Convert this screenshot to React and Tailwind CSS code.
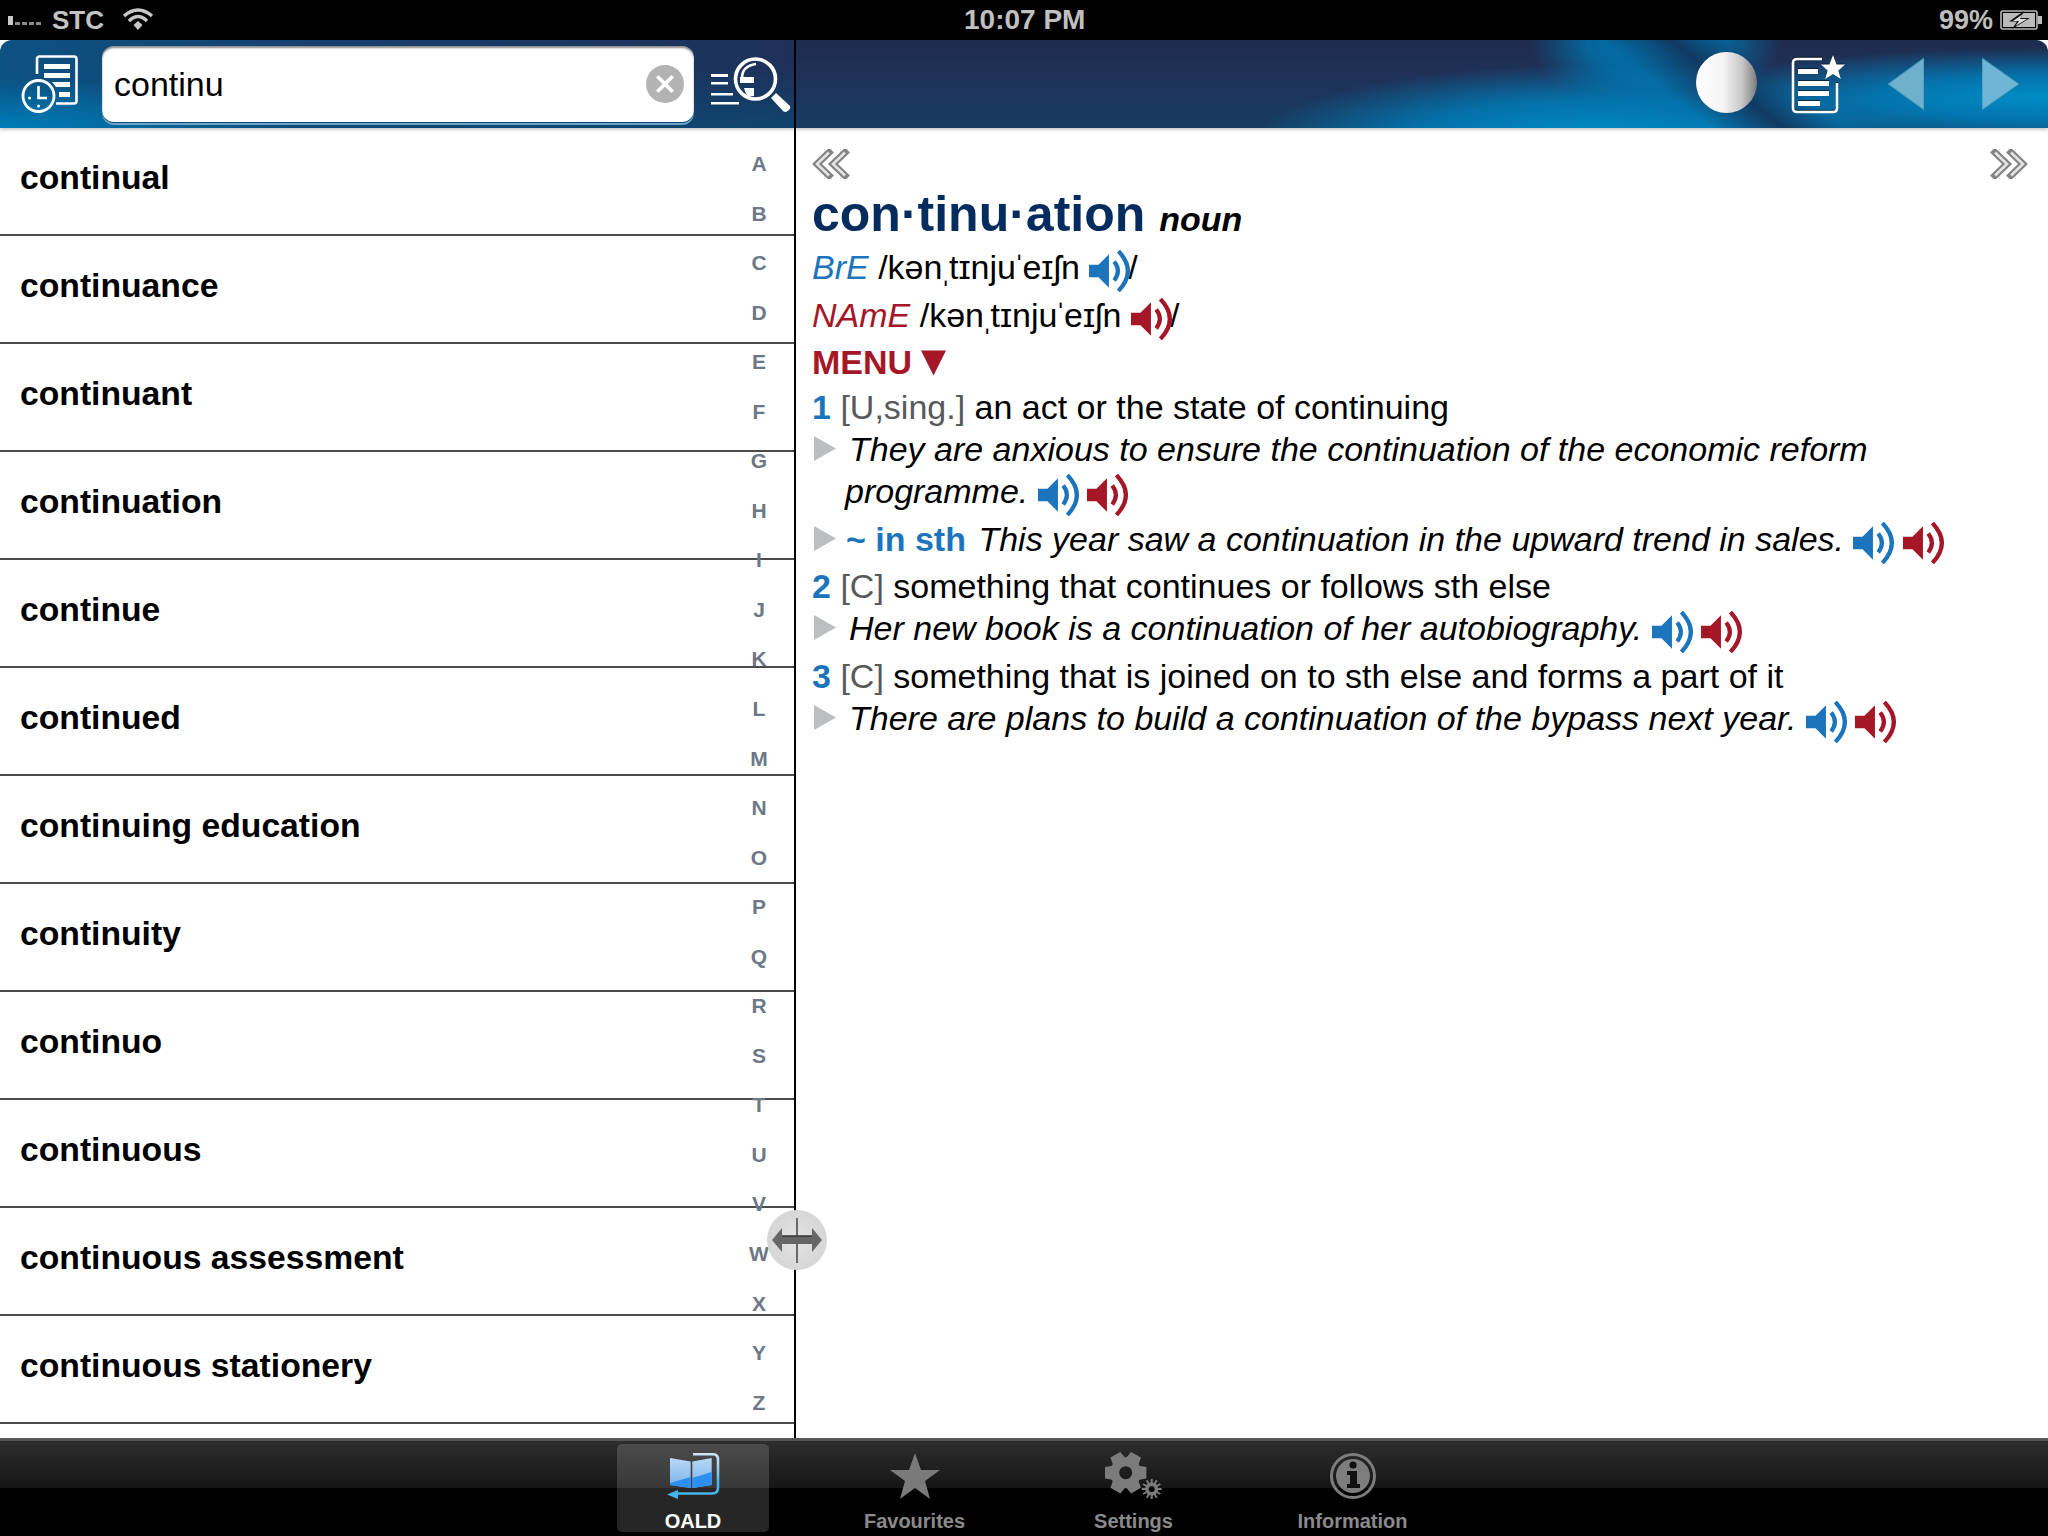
import React from "react";

const words = ["continual","continuance","continuant","continuation","continue","continued","continuing education","continuity","continuo","continuous","continuous assessment","continuous stationery"];
const letters = "ABCDEFGHIJKLMNOPQRSTUVWXYZ".split("");

function Speaker({ color, className = "" }) {
  return (
    <svg viewBox="0 0 40 40" className={"inline-block w-[42px] h-[42px] align-middle translate-y-[1px] " + className}>
      <path d="M0 14H9L19 4V36L9 26H0Z" fill={color} />
      <path d="M24 11Q31 20 24 29" fill="none" stroke={color} strokeWidth="4" />
      <path d="M28 1Q46 20 28 39" fill="none" stroke={color} strokeWidth="4" />
    </svg>
  );
}
const Blue = (p) => <Speaker color="#1c75bc" {...p} />;
const Red = (p) => <Speaker color="#a51727" {...p} />;

function Tri() {
  return (
    <svg viewBox="0 0 22 25" className="w-[22px] h-[25px] shrink-0 mt-[8px] ml-[2px]">
      <path d="M0 0L22 12.5L0 25Z" fill="#bcbec0" />
    </svg>
  );
}

function Chevrons({ flip }) {
  const paths = ["M17 3.5L5 15L17 26.5", "M33 3.5L21 15L33 26.5"];
  return (
    <svg viewBox="0 0 38 30" className={"w-[38px] h-[30px] " + (flip ? "-scale-x-100" : "")}>
      {paths.map((d) => (
        <g key={d} fill="none">
          <path d={d} stroke="#848484" strokeWidth="7" strokeLinecap="square" />
          <path d={d} stroke="#e4e4e4" strokeWidth="2.6" />
        </g>
      ))}
    </svg>
  );
}

function HistoryIcon() {
  return (
    <svg viewBox="0 0 57 59" className="w-[57px] h-[59px] shrink-0">
      <path d="M16 19V4Q16 1.5 18.5 1.5H53Q55.5 1.5 55.5 4V46Q55.5 48.5 53 48.5H35" fill="none" stroke="#fff" strokeWidth="2.6" />
      <path d="M23 9H49V14H23ZM23 18H49V23H23ZM31 27H49V32H35ZM38 37H49V42H38Z" fill="#fff" />
      <circle cx="17.5" cy="41" r="15.5" fill="none" stroke="#fff" strokeWidth="2.8" />
      <path d="M17.5 31V43H26" fill="none" stroke="#fff" strokeWidth="2.6" />
      <circle cx="17.5" cy="51" r="1.5" fill="#fff" />
      <circle cx="8.5" cy="43" r="1.5" fill="#fff" />
    </svg>
  );
}

function SearchIcon() {
  return (
    <svg viewBox="0 0 81 56" className="w-[81px] h-[56px] shrink-0">
      <path d="M1 18H18V21H1ZM1 26H18V28.5H1ZM1 37H23V39.5H1ZM1 46H29V48.5H1Z" fill="#fff" />
      <circle cx="45.5" cy="23" r="20" fill="none" stroke="#fff" strokeWidth="3.6" />
      <path d="M32 22Q32 10 46 8" fill="none" stroke="#fff" strokeWidth="2.6" />
      <path d="M30 21H44V27H30ZM34 32H44V40H38Q35 37 34 32Z" fill="#fff" />
      <path d="M61 42L66 37L80 50Q81 52 79 54L76 56Q74 56 73 55Z" fill="#fff" />
    </svg>
  );
}

function DocStar() {
  return (
    <svg viewBox="0 0 54 60" className="w-[54px] h-[60px] drop-shadow-[0_-1px_0_rgba(0,0,0,0.55)]">
      <path d="M31 5H6Q2 5 2 9V54Q2 58 6 58H42Q46 58 46 54V29" fill="none" stroke="#fff" strokeWidth="2.6" />
      <path d="M7 15H27V20H7ZM7 27H38V32H7ZM7 37H38V42H7ZM7 47H29V52H7Z" fill="#fff" />
      <path d="M42 1L45.6 10.6H54L47.4 16.4L49.8 25L42 20L34.2 25L36.6 16.4L30 10.6H38.4Z" fill="#fff" />
    </svg>
  );
}

function Wifi() {
  return (
    <svg viewBox="0 0 32 24" className="w-[32px] h-[24px]">
      <path d="M2 9Q16 -3 30 9" fill="none" stroke="#c8c8c8" strokeWidth="3.4" />
      <path d="M7 14Q16 5 25 14" fill="none" stroke="#c8c8c8" strokeWidth="3.4" />
      <path d="M11.5 18L16 14L20.5 18L16 23Z" fill="#c8c8c8" />
    </svg>
  );
}

function Battery() {
  return (
    <svg viewBox="0 0 42 20" className="w-[42px] h-[20px]">
      <rect x="1" y="1" width="36" height="18" rx="1.5" fill="none" stroke="#bbb" strokeWidth="1.6" />
      <rect x="3" y="3" width="32" height="14" fill="#bbb" />
      <rect x="38" y="6" width="4" height="8" fill="#bbb" />
      <path d="M24 1L9 11.5H17L12 19L30 8H21Z" fill="#111" />
      <path d="M23 4L13 11H19L15.5 16L27 9H20Z" fill="#ddd" />
    </svg>
  );
}

function Signal() {
  return (
    <div className="flex items-end gap-[2px] w-[39px]">
      <div className="w-[5px] h-[9px] bg-[#c8c8c8]" />
      {[0, 1, 2, 3].map((i) => <div key={i} className="w-[5px] h-[3px] bg-[#8a8a8a]" />)}
    </div>
  );
}

function Book() {
  return (
    <svg viewBox="0 0 54 46" className="w-[54px] h-[46px]">
      <defs>
        <linearGradient id="pg" x1="0" y1="0" x2="0" y2="1">
          <stop offset="0" stopColor="#b9d8f6" />
          <stop offset="1" stopColor="#78b2ea" />
        </linearGradient>
        <linearGradient id="arc" x1="0" y1="0" x2="0" y2="1">
          <stop offset="0" stopColor="#cde6f8" />
          <stop offset="0.5" stopColor="#7cc8f2" />
          <stop offset="0.7" stopColor="#45b6f0" />
          <stop offset="1" stopColor="#45b6f0" />
        </linearGradient>
      </defs>
      <path d="M4 5L24.7 8.5V35L4 32Z" fill="url(#pg)" />
      <path d="M26.3 8.5L45.7 5V32L26.3 35Z" fill="url(#pg)" />
      <path d="M4 30L24.7 24V35L4 32Z" fill="#2b90f0" />
      <path d="M26.3 25L45.7 19V32L26.3 35Z" fill="#2b90f0" />
      <path d="M27 1.3H47Q52 1.3 52 6.5V35Q52 40.5 46 40.5H11" fill="none" stroke="url(#arc)" strokeWidth="2.6" />
      <path d="M1 41.5L12 37V46Z" fill="#45b6f0" />
    </svg>
  );
}

function Star() {
  return (
    <svg viewBox="0 0 50 46" className="w-[50px] h-[46px]">
      <path d="M25 0L31 17H50L35 28L40 46L25 35L10 46L15 28L0 17H19Z" fill="#7a7a7a" />
    </svg>
  );
}

function Gear() {
  const big = [30, 90, 150, 210, 270, 330];
  const small = [0, 30, 60, 90, 120, 150, 180, 210, 240, 270, 300, 330];
  return (
    <svg viewBox="0 0 58 46" className="w-[58px] h-[46px] overflow-visible">
      {big.map((a) => <path key={a} d="M15 -1H26.4L28 8H13.4Z" fill="#7b7b7b" transform={`rotate(${a} 20.7 19.7)`} />)}
      <circle cx="20.7" cy="19.7" r="11" fill="none" stroke="#7b7b7b" strokeWidth="9" />
      {small.map((a) => <rect key={a} x="45.7" y="26" width="2" height="6" fill="#7b7b7b" transform={`rotate(${a} 46.7 36)`} />)}
      <circle cx="46.7" cy="36" r="4.8" fill="none" stroke="#7b7b7b" strokeWidth="3.6" />
    </svg>
  );
}

function Info() {
  return (
    <svg viewBox="0 0 46 46" className="w-[46px] h-[46px]">
      <circle cx="23" cy="23" r="21.5" fill="none" stroke="#7d7d7d" strokeWidth="3" />
      <circle cx="23" cy="23" r="17" fill="#7d7d7d" />
      <circle cx="23" cy="12" r="3.6" fill="#111" />
      <path d="M17 18H27V31H30V35H17V31H20V22H17Z" fill="#111" />
    </svg>
  );
}

function Tab({ active, icon, label }) {
  return (
    <div className={"w-[152px] h-[88px] flex flex-col items-center rounded-[5px] " + (active ? "ml-[31px] mr-[36px] bg-white/15" : "mx-[33.5px]")}>
      <div className="h-[46px] mt-[9px]">{icon}</div>
      <span className={"mt-[10px] text-[20px] leading-[24px] font-bold " + (active ? "text-white" : "text-[#8a8a8a]")}>{label}</span>
    </div>
  );
}

const Phon = () => (
  <>/kən<span className="-mx-[2.4px]">ˌ</span>tɪnju<span className="-mx-[2.4px]">ˈ</span>eɪʃn</>
);

export default function App() {
  return (
    <div className="relative w-[2048px] h-[1536px] bg-black overflow-hidden font-['Liberation_Sans',sans-serif] text-black">
      <div className="relative h-[40px] bg-black flex items-center justify-between pl-[8px] pr-[6px] text-[#bdbdbd]">
        <div className="flex items-center">
          <Signal />
          <span className="ml-[5px] text-[26px] font-bold text-[#c4c4c4]">STC</span>
          <span className="ml-[18px] mb-[3px]"><Wifi /></span>
        </div>
        <span className="absolute left-[964px] text-[28px] leading-[40px] font-bold text-[#c0c0c0]">10:07 PM</span>
        <div className="flex items-center gap-[7px]">
          <span className="text-[27px] font-bold">99%</span>
          <Battery />
        </div>
      </div>

      <div className="flex h-[1398px] bg-white">
        <div className="w-[794px] flex flex-col relative">
          <div className="relative z-10 h-[88px] rounded-tl-[12px] flex items-center pl-[21px] shadow-[0_2px_3px_rgba(0,0,0,0.2)] bg-[radial-gradient(ellipse_300px_50px_at_0%_100%,#007db8_0%,rgba(0,110,170,0)_100%),linear-gradient(180deg,rgba(0,0,0,0)_30%,rgba(5,80,125,0.6)_100%),linear-gradient(95deg,#0c5283_0%,#16406e_40%,#1e3058_100%)]">
            <HistoryIcon />
            <div className="ml-[24px] w-[592px] h-[76px] bg-white rounded-[12px] shadow-[0_1px_0_#0b4a78,0_3px_0_#6ea5c4,inset_0_2px_2px_rgba(0,0,0,0.45)] flex items-center pl-[12px] pr-[10px] justify-between">
              <span className="text-[34px] leading-[40px]">continu</span>
              <span className="w-[38px] h-[38px] rounded-full bg-[#b3b3b3] flex items-center justify-center">
                <svg viewBox="0 0 20 20" className="w-[22px] h-[22px]">
                  <path d="M3 3L17 17M17 3L3 17" stroke="#fff" strokeWidth="3.4" />
                </svg>
              </span>
            </div>
            <div className="ml-[16px]"><SearchIcon /></div>
          </div>
          <div className="relative flex-1 overflow-hidden">
            {words.map((w) => (
              <div key={w} className="h-[108px] border-b-2 border-[#4a4a4a] pl-[20px] pb-[9px] flex items-center text-[33.7px] font-bold leading-[40px]">
                {w}
              </div>
            ))}
            <div className="absolute right-[19px] top-[23px] h-[1264px] w-[32px] flex flex-col justify-between items-center">
              {letters.map((l) => (
                <span key={l} className="h-[25px] text-[21px] leading-[25px] font-bold text-[#6d7887]">{l}</span>
              ))}
            </div>
          </div>
        </div>

        <div className="w-[2px] bg-black" />

        <div className="flex-1 flex flex-col">
          <div className="relative z-10 h-[88px] rounded-tr-[12px] flex items-center justify-end pr-[29px] shadow-[0_2px_3px_rgba(0,0,0,0.2)] bg-[linear-gradient(38deg,rgba(18,55,95,0)_565px,rgba(18,55,95,0.95)_608px,rgba(18,55,95,0)_645px),radial-gradient(ellipse_340px_75px_at_800px_100px,#0090cc_0%,rgba(0,125,185,0.8)_55%,rgba(0,125,185,0)_100%),radial-gradient(ellipse_125px_75px_at_860px_0px,#0073ad_0%,rgba(0,115,173,0.8)_55%,rgba(0,115,173,0)_100%),radial-gradient(ellipse_360px_50px_at_1240px_58px,#008cc6_0%,rgba(0,125,185,0.85)_45%,rgba(0,125,185,0)_100%),linear-gradient(180deg,#1e2c4e_0%,#1f3158_40%,#173d62_100%)]">
            <div className="w-[61px] h-[61px] mb-[3px] rounded-full bg-[linear-gradient(90deg,#ffffff_0%,#f4f4f4_45%,#c8c8c8_75%,#7c7c7c_100%)]" />
            <div className="ml-[34px]"><DocStar /></div>
            <svg viewBox="0 0 36 52" className="ml-[43px] w-[36px] h-[52px]">
              <path d="M36 0V52L0 26Z" fill="#6fb0cd" stroke="#3f8fb5" strokeWidth="1" />
            </svg>
            <svg viewBox="0 0 37 52" className="ml-[58px] w-[37px] h-[52px]">
              <path d="M0 0V52L37 26Z" fill="#6fb5d6" stroke="#3f8fb5" strokeWidth="1" />
            </svg>
          </div>

          <div className="flex-1 bg-white pl-[16px] pr-[20px] pt-[21px] text-[34px] leading-[42px]">
            <div className="flex justify-between h-[30px]">
              <Chevrons />
              <Chevrons flip />
            </div>
            <div className="mt-[5px] h-[60px] leading-[60px] text-[#042c5e] text-[50px] font-bold whitespace-nowrap">
              con·tinu·ation <span className="text-[34px] text-black italic">noun</span>
            </div>
            <div className="h-[46px] leading-[46px] whitespace-nowrap">
              <i className="text-[#1c75bc]">BrE</i> <Phon /> <Blue /><span className="-ml-[3px]">/</span>
            </div>
            <div className="h-[50px] leading-[50px] whitespace-nowrap">
              <i className="text-[#a51727]">NAmE</i> <Phon /> <Red /><span className="-ml-[3px]">/</span>
            </div>
            <div className="h-[44px] leading-[44px] font-bold text-[#a51727] flex items-center">
              MENU
              <svg viewBox="0 0 26 26" className="ml-[9px] mt-[2px] w-[25px] h-[26px]"><path d="M0 0H26L13 26Z" fill="#a51727" /></svg>
            </div>

            <div className="mt-[2px] h-[42px]"><b className="text-[#1c75bc]">1</b> <span className="text-[#58595b]">[U,sing.]</span> an act or the state of continuing</div>
            <div className="flex">
              <Tri />
              <div className="pl-[9px] italic">
                <div className="pl-[4px] h-[42px] whitespace-nowrap">They are anxious to ensure the continuation of the economic reform</div>
                <div className="h-[48px] whitespace-nowrap">programme. <Blue /> <Red className="-ml-[2px]" /></div>
              </div>
            </div>
            <div className="flex">
              <Tri />
              <div className="pl-[10px] h-[47px] whitespace-nowrap">
                <b className="text-[#1c75bc]">~ in sth</b> <i className="ml-[3px]">This year saw a continuation in the upward trend in sales.</i> <Blue /> <Red className="-ml-[2px]" />
              </div>
            </div>
            <div className="h-[42px]"><b className="text-[#1c75bc]">2</b> <span className="text-[#58595b]">[C]</span> something that continues or follows sth else</div>
            <div className="flex h-[48px]">
              <Tri />
              <div className="pl-[13px] italic whitespace-nowrap">Her new book is a continuation of her autobiography. <Blue /> <Red className="-ml-[2px]" /></div>
            </div>
            <div className="h-[42px]"><b className="text-[#1c75bc]">3</b> <span className="text-[#58595b]">[C]</span> something that is joined on to sth else and forms a part of it</div>
            <div className="flex">
              <Tri />
              <div className="pl-[13px] italic whitespace-nowrap">There are plans to build a continuation of the bypass next year. <Blue /> <Red className="-ml-[2px]" /></div>
            </div>
          </div>
        </div>
      </div>

      <div className="h-[98px] border-t-[3px] border-[#555] flex justify-center pt-[3px] bg-[linear-gradient(180deg,#2e2e2e_0%,#151515_50%,#000_50%,#000_100%)]">
        <Tab active icon={<Book />} label="OALD" />
        <Tab icon={<Star />} label="Favourites" />
        <Tab icon={<Gear />} label="Settings" />
        <Tab icon={<Info />} label="Information" />
      </div>

      <div className="absolute left-[767px] top-[1210px] w-[60px] h-[60px] rounded-full bg-[radial-gradient(circle_at_50%_50%,#e4e4e4_0%,#d6d6d6_70%,#f2f2f2_82%,#9a9a9a_95%,#888_100%)] flex items-center justify-center">
        <svg viewBox="0 0 50 50" className="w-[50px] h-[50px]">
          <path d="M25 3V48" stroke="#6a6a6a" strokeWidth="2" />
          <path d="M0 25L10 13V21H40V13L50 25L40 37V29H10V37Z" fill="#666" />
          <path d="M10 21H40" stroke="#333" strokeWidth="1.5" />
        </svg>
      </div>
    </div>
  );
}
